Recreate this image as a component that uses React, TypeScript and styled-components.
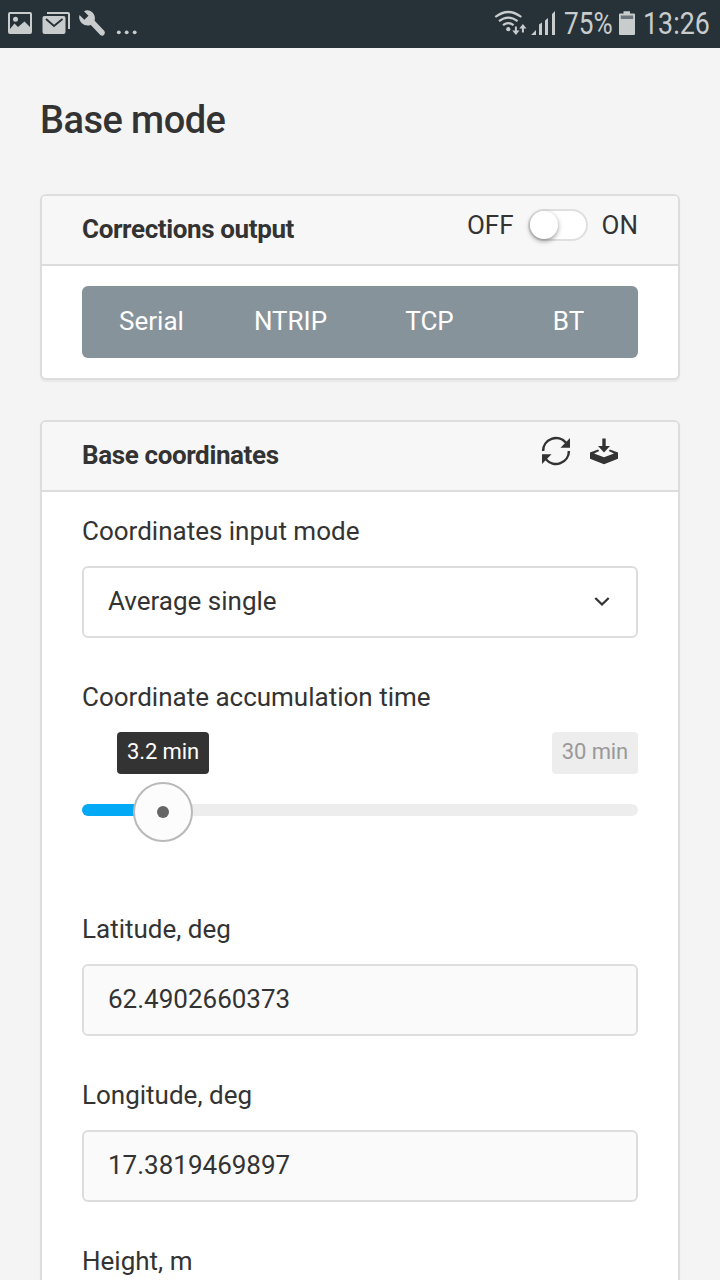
import React from "react";
import styled, { createGlobalStyle } from "styled-components";

const Global = createGlobalStyle`
  * { box-sizing: border-box; }
  body {
    margin: 0;
    background: #f4f4f4;
    color: #333;
    font: 400 26px/38px Roboto, "Liberation Sans", sans-serif;
  }
`;

const Screen = styled.div`
  width: 720px;
  height: 1280px;
  overflow: hidden;
  background: #f4f4f4;
`;

const StatusBar = styled.header`
  height: 48px;
  display: flex;
  justify-content: space-between;
  background: #263238;
  color: #c9cccd;
`;

const StatusText = styled.span<{ $width: number; $scale: number }>`
  width: ${(p) => p.$width}px;
  font-size: 31px;
  line-height: 48px;
  white-space: nowrap;
  transform: scaleX(${(p) => p.$scale});
  transform-origin: left center;
`;

const StatusGroup = styled.div`
  display: flex;
`;

const Page = styled.main`
  padding: 0 40px;
`;

const Title = styled.h1`
  margin: 0;
  padding: 48px 0 50px;
  font-size: 38px;
  line-height: 48px;
  font-weight: 500;
  letter-spacing: -0.55px;
`;

const Card = styled.section`
  margin-bottom: 40px;
  border: 2px solid #ddd;
  border-radius: 6px;
  background: #fff;
  box-shadow: 0 2px 2px rgba(0, 0, 0, 0.05);
  overflow: hidden;
`;

const CardHeader = styled.div`
  height: 70px;
  padding: 0 40px;
  display: flex;
  justify-content: space-between;
  background: #f7f7f7;
  border-bottom: 2px solid #ddd;
`;

const CardTitle = styled.h2`
  margin: 0;
  padding-top: 14px;
  font-size: 26px;
  line-height: 38px;
  font-weight: 700;
  letter-spacing: -0.38px;
`;

const CardBody = styled.div`
  padding: 20px 40px;
`;

const ToggleRow = styled.div`
  height: 58px;
  display: flex;
  align-items: center;
  gap: 14px;
`;

const Toggle = styled.span`
  width: 60px;
  height: 32px;
  border: 2px solid #dfdfdf;
  border-radius: 16px;
  background: #fff;
`;

const Knob = styled.span`
  display: block;
  width: 28px;
  height: 28px;
  border-radius: 50%;
  background: #fff;
  box-shadow: 0 2px 5px rgba(0, 0, 0, 0.4);
`;

const Tabs = styled.div`
  height: 72px;
  display: grid;
  grid-template-columns: repeat(4, 1fr);
  border-radius: 6px;
  background: #87939a;
  color: #fff;
`;

const Tab = styled.button`
  border: 0;
  padding: 0 0 2px;
  background: none;
  color: inherit;
  font: inherit;
`;

const Actions = styled.div`
  display: flex;
  gap: 16px;
  padding: 13px 18px 0 0;
`;

const Field = styled.div`
  margin-bottom: 40px;
`;

const Label = styled.div`
  height: 38px;
  margin-bottom: 16px;
`;

const Box = styled.div<{ $filled?: boolean }>`
  height: 72px;
  padding: 0 26px 2px 24px;
  display: flex;
  align-items: center;
  justify-content: space-between;
  border: 2px solid #ddd;
  border-radius: 6px;
  background: ${(p) => (p.$filled ? "#fafafa" : "#fff")};
`;

const Slider = styled.div`
  height: 138px;
`;

const Bubbles = styled.div`
  display: flex;
  justify-content: space-between;
  padding-left: 35px;
`;

const Bubble = styled.span<{ $active?: boolean }>`
  width: ${(p) => (p.$active ? 92 : 86)}px;
  height: 42px;
  border-radius: 4px;
  text-align: center;
  font-size: 22px;
  letter-spacing: -0.12px;
  line-height: 39px;
  background: ${(p) => (p.$active ? "#333" : "#ededed")};
  color: ${(p) => (p.$active ? "#fff" : "#999")};
`;

const Track = styled.div`
  position: relative;
  height: 12px;
  margin-top: 30px;
  border-radius: 6px;
  background: linear-gradient(to right, #03a9f4 81px, #ededed 81px);
`;

const Handle = styled.span`
  position: absolute;
  left: 51px;
  top: -22px;
  width: 60px;
  height: 60px;
  display: grid;
  place-items: center;
  border: 2px solid #b9b9b9;
  border-radius: 50%;
  background: #fcfcfc;

  &::after {
    content: "";
    width: 12px;
    height: 12px;
    border-radius: 50%;
    background: #666;
  }
`;

const NotificationIcons = () => (
  <svg width="150" height="48" viewBox="0 0 150 48" fill="#c9cccd">
    <path fillRule="evenodd" d="M10 12H30Q32 12 32 14V32Q32 34 30 34H10Q8 34 8 32V14Q8 12 10 12ZM10 14V29L14.5 23.5L18 27L24.5 21.5L30 27V14Z" />
    <circle cx="15.5" cy="19.3" r="2.5" />
    <path d="M47 12H68Q70 12 70 14V29H68V14H47Z" />
    <rect x="42.5" y="16" width="23" height="18" rx="2" />
    <path d="M46 19L54 26L62.5 19" fill="none" stroke="#263238" strokeWidth="1.9" />
    <path d="M84 11.2Q88.5 9 92.3 12.3Q95.7 15.5 94.7 20.7L104.4 31Q105.5 32.7 104.3 34.5Q102.5 36.7 100.3 35L90.8 25Q85.6 26.6 81.8 23.2Q78.1 19.5 79.5 15L84.3 19.7L88.5 15.8Z" />
    <circle cx="118.8" cy="32.3" r="1.9" />
    <circle cx="126.7" cy="32.3" r="1.9" />
    <circle cx="134.7" cy="32.3" r="1.9" />
  </svg>
);

const SignalIcons = () => (
  <svg width="70" height="48" viewBox="494 0 70 48" fill="#c9cccd">
    <g fill="none" stroke="#c9cccd" strokeWidth="2.2">
      <path d="M495.3 17Q508.3 7 521.3 17" />
      <path d="M499 21.2Q508.3 14 517.6 21.2" />
      <path d="M503 25.2Q508.3 21 513.6 25.2" />
    </g>
    <circle cx="508.3" cy="29.2" r="2.1" />
    <path d="M514.9 26.5H516.9V30.5H519.5L515.9 35L512.3 30.5H514.9ZM521.9 32.5H523.9V28.5H526.5L522.9 24L519.3 28.5H521.9Z" />
    <path d="M531 35L536 30V35ZM539 24.5L542 22.5V35H539ZM545 20.5L548 18V35H545ZM552 14L555 11V35H552Z" />
  </svg>
);

const BatteryIcon = () => (
  <svg width="24" height="48" viewBox="619 0 24 48">
    <path d="M623.5 11.3H630V13.5H634Q635 13.5 635 14.5V34Q635 35 634 35H620Q619 35 619 34V14.5Q619 13.5 620 13.5H623.5Z" fill="#c9cccd" />
    <path d="M620.8 15.5H633.2V19H620.8Z" fill="#69757a" />
  </svg>
);

const RefreshIcon = () => (
  <svg width="32" height="32" viewBox="0 0 32 32">
    <path d="M3.1 16A12.9 12.7 0 0 1 26 7.8M28.9 16A12.9 12.7 0 0 1 6 24.2" fill="none" stroke="#333" strokeWidth="2.5" />
    <path d="M30 3V12.8H20.5ZM2 19.2H11.5L2 29Z" fill="#333" />
  </svg>
);

const SaveIcon = () => (
  <svg width="32" height="32" viewBox="0 0 32 32" fill="#333">
    <path d="M14.3 3.5H17.7V11H22L16 17.6L10 11H14.3Z" />
    <path d="M10 14.5L11.3 16L6 18.4L16 22.3L26 18.4L20.7 16L22 14.5L30 17.6V23.8L16 29.3L2 23.8V17.6Z" />
  </svg>
);

const Chevron = () => (
  <svg width="16" height="12" viewBox="0 0 16 12">
    <path d="M1.3 3L8 9.5L14.7 3" fill="none" stroke="#333" strokeWidth="2.3" />
  </svg>
);

const readings = [
  ["Latitude, deg", "62.4902660373"],
  ["Longitude, deg", "17.3819469897"],
  ["Height, m", ""],
];

export default function App() {
  return (
    <Screen>
      <Global />
      <StatusBar>
        <NotificationIcons />
        <StatusGroup>
          <SignalIcons />
          <StatusText $width={55} $scale={0.845}>75%</StatusText>
          <BatteryIcon />
          <StatusText $width={77} $scale={0.865}>13:26</StatusText>
        </StatusGroup>
      </StatusBar>
      <Page>
        <Title>Base mode</Title>
        <Card>
          <CardHeader>
            <CardTitle>Corrections output</CardTitle>
            <ToggleRow>
              <span>OFF</span>
              <Toggle><Knob /></Toggle>
              <span>ON</span>
            </ToggleRow>
          </CardHeader>
          <CardBody>
            <Tabs>
              {["Serial", "NTRIP", "TCP", "BT"].map((name) => (
                <Tab key={name}>{name}</Tab>
              ))}
            </Tabs>
          </CardBody>
        </Card>
        <Card>
          <CardHeader>
            <CardTitle>Base coordinates</CardTitle>
            <Actions>
              <RefreshIcon />
              <SaveIcon />
            </Actions>
          </CardHeader>
          <CardBody>
            <Field>
              <Label>Coordinates input mode</Label>
              <Box>Average single<Chevron /></Box>
            </Field>
            <Field>
              <Label>Coordinate accumulation time</Label>
              <Slider>
                <Bubbles>
                  <Bubble $active>3.2 min</Bubble>
                  <Bubble>30 min</Bubble>
                </Bubbles>
                <Track><Handle /></Track>
              </Slider>
            </Field>
            {readings.map(([label, value]) => (
              <Field key={label}>
                <Label>{label}</Label>
                <Box $filled>{value}</Box>
              </Field>
            ))}
          </CardBody>
        </Card>
      </Page>
    </Screen>
  );
}
